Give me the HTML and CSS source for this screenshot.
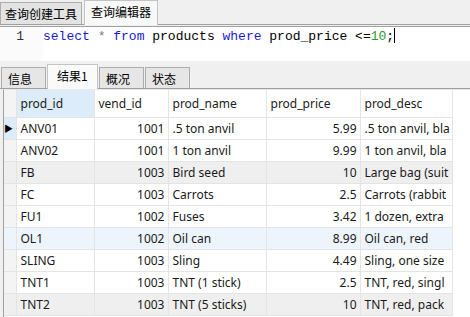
FILE: index.html
```html
<!DOCTYPE html>
<html lang="zh">
<head>
    <meta charset="UTF-8">
    <title>查询编辑器</title>
    <link rel="stylesheet" href="styles.css">
</head>
<body>
    <div class="top-tabs">
        <div class="tab">查询创建工具</div>
        <div class="tab active">查询编辑器</div>
    </div>

    <div class="editor">
        <div class="gutter">1</div>
        <div class="code"><span class="kw">select</span> <span class="op">*</span> <span class="kw">from</span> products <span class="kw">where</span> prod_price &lt;=<span class="num">10</span>;<span class="caret"></span></div>
    </div>

    <div class="result-tabs">
        <div class="rtab">信息</div>
        <div class="rtab active">结果1</div>
        <div class="rtab">概况</div>
        <div class="rtab">状态</div>
    </div>

    <div class="grid-wrap">
        <table class="grid">
            <colgroup>
                <col class="c0">
                <col class="c1">
                <col class="c2">
                <col class="c3">
                <col class="c4">
                <col class="c5">
            </colgroup>
            <thead>
                <tr>
                    <th class="rh"></th>
                    <th class="sel">prod_id</th>
                    <th>vend_id</th>
                    <th>prod_name</th>
                    <th>prod_price</th>
                    <th>prod_desc</th>
                </tr>
            </thead>
            <tbody>
                <tr><td class="rh cur">&#9654;</td><td>ANV01</td><td class="num">1001</td><td>.5 ton anvil</td><td class="num">5.99</td><td class="desc">.5 ton anvil, bla</td></tr>
                <tr><td class="rh"></td><td>ANV02</td><td class="num">1001</td><td>1 ton anvil</td><td class="num">9.99</td><td class="desc">1 ton anvil, bla</td></tr>
                <tr class="gray"><td class="rh"></td><td>FB</td><td class="num">1003</td><td>Bird seed</td><td class="num">10</td><td class="desc">Large bag (suit</td></tr>
                <tr><td class="rh"></td><td>FC</td><td class="num">1003</td><td>Carrots</td><td class="num">2.5</td><td class="desc">Carrots (rabbit</td></tr>
                <tr><td class="rh"></td><td>FU1</td><td class="num">1002</td><td>Fuses</td><td class="num">3.42</td><td class="desc">1 dozen, extra</td></tr>
                <tr class="blue"><td class="rh"></td><td>OL1</td><td class="num">1002</td><td>Oil can</td><td class="num">8.99</td><td class="desc">Oil can, red</td></tr>
                <tr><td class="rh"></td><td>SLING</td><td class="num">1003</td><td>Sling</td><td class="num">4.49</td><td class="desc">Sling, one size</td></tr>
                <tr><td class="rh"></td><td>TNT1</td><td class="num">1003</td><td>TNT (1 stick)</td><td class="num">2.5</td><td class="desc">TNT, red, singl</td></tr>
                <tr class="gray"><td class="rh"></td><td>TNT2</td><td class="num">1003</td><td>TNT (5 sticks)</td><td class="num">10</td><td class="desc">TNT, red, pack</td></tr>
            </tbody>
        </table>
    </div>
</body>
</html>
```

FILE: styles.css
```css
body {
    margin: 0;
    width: 470px;
    height: 317px;
    overflow: hidden;
    background-color: #f0f0f0;
    font-family: "Noto Sans CJK SC", sans-serif;
    color: #000;
}
.top-tabs {
    display: flex;
    align-items: flex-end;
    height: 24px;
    border-bottom: 1px solid #a0a0a0;
    background-color: #f0f0f0;
}
.tab {
    height: 21px;
    line-height: 21px;
    padding: 0 4px;
    margin-right: 2px;
    font-size: 12px;
    background-color: #e3e3e3;
    border: 1px solid #adadad;
    border-bottom: none;
}
.tab.active {
    height: 24px;
    line-height: 22px;
    padding: 0 6px;
    background-color: #f8f8f8;
    border-color: #c4c4c4;
    margin-bottom: -1px;
}
.editor {
    display: flex;
    height: 34px;
    margin-top: 1px;
    background-color: #fff;
    border-top: 1px solid #a0a0a0;
    font-family: "Liberation Mono", monospace;
    font-size: 13px;
    line-height: 18px;
}
.gutter {
    width: 24px;
    padding-top: 1px;
    padding-right: 19px;
    text-align: right;
    color: #333;
    background-color: #fbfbfb;
}
.code {
    padding-top: 1px;
    white-space: pre;
}
.kw {
    color: #1a1ad0;
}
.op {
    color: #808080;
}
.num {
    color: #2a9a2a;
}
.caret {
    display: inline-block;
    width: 1px;
    height: 15px;
    background-color: #000;
    vertical-align: -3px;
}
.result-tabs {
    display: flex;
    align-items: flex-end;
    height: 25px;
    padding: 1px 0 0 1px;
    margin-top: 1px;
    border-bottom: 1px solid #a0a0a0;
}
.rtab {
    height: 21px;
    line-height: 21px;
    width: 45px;
    padding-left: 6px;
    box-sizing: border-box;
    font-size: 12px;
    background-color: #e6e6e6;
    border: 1px solid #adadad;
    border-bottom: none;
    margin-right: 1px;
}
.rtab.active {
    width: 51px;
    height: 25px;
    line-height: 22px;
    padding-left: 9px;
    background-color: #fafafa;
    border-color: #c4c4c4;
    margin-bottom: -1px;
}
.grid-wrap {
    margin-left: 3px;
    height: 240px;
    background-color: #fff;
    border-left: 1px solid #a0a0a0;
    border-top: 1px solid #e8e8e8;
}
.grid {
    border-collapse: collapse;
    table-layout: fixed;
    width: 448px;
    font-family: "Noto Sans", "Noto Sans CJK SC", sans-serif;
    font-size: 12px;
    color: #1a1a1a;
}
.grid .c0 { width: 12px; }
.grid .c1 { width: 78px; }
.grid .c2 { width: 74px; }
.grid .c3 { width: 98px; }
.grid .c4 { width: 94px; }
.grid .c5 { width: 92px; }
.grid th,
.grid td {
    box-sizing: border-box;
    height: 22px;
    padding: 0 3px 0 4px;
    border: 1px solid #e4e4e4;
    white-space: nowrap;
    overflow: hidden;
    text-align: left;
    font-weight: normal;
}
.grid th {
    height: 27px;
    border-top: none;
}
.grid td.num {
    text-align: right;
    color: #1a1a1a;
    padding-right: 3px;
}
.grid td.desc {
    padding-right: 0;
}
.grid .rh {
    padding: 0;
    background-color: #f4f4f4;
    border-left: none;
}
.grid .rh.cur {
    background-color: #dcecf8;
    font-size: 9px;
    color: #000;
}
.grid th.sel {
    background-color: #dcecf8;
}
.grid tr.gray td {
    background-color: #efefef;
}
.grid tr.blue td {
    background-color: #edf4fc;
}
```
